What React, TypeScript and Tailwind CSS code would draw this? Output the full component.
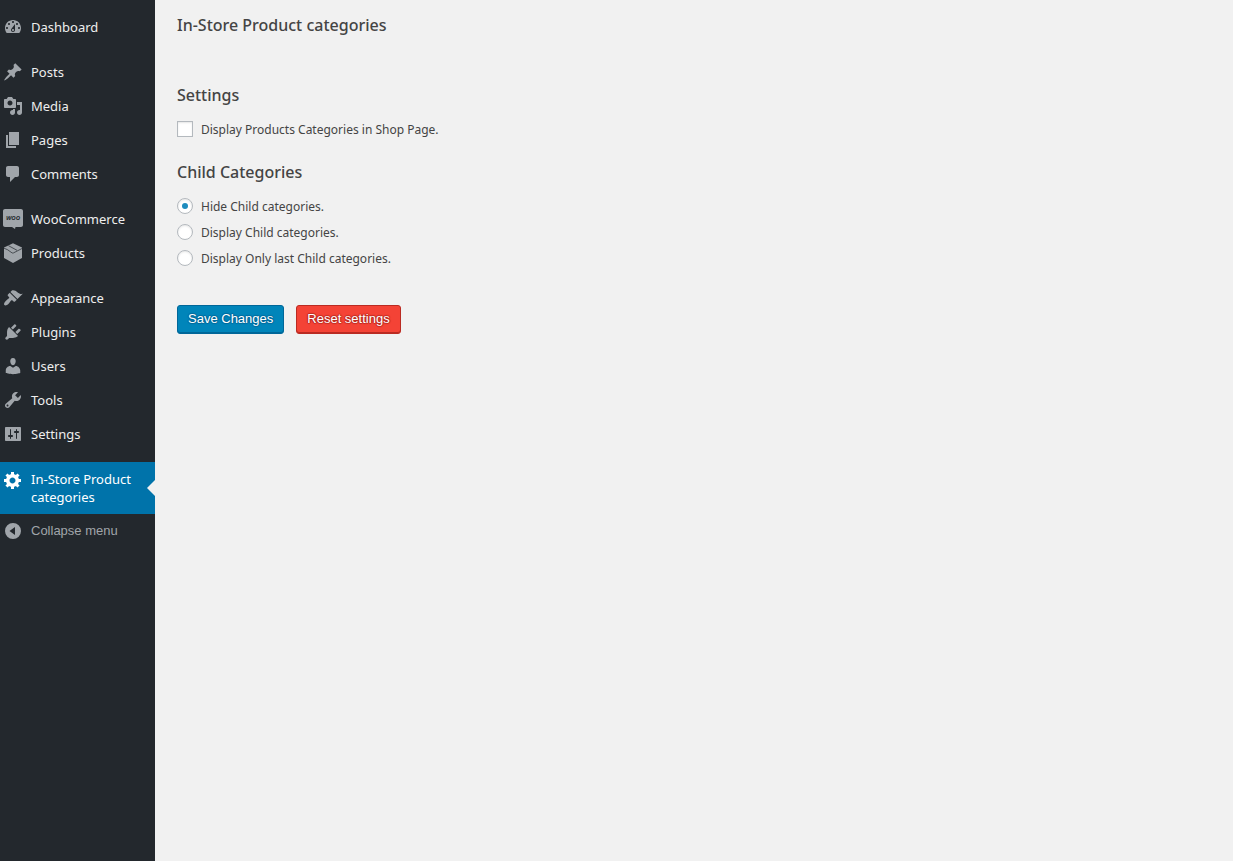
import React from "react";

type MenuItem = { label: string; icon: React.ReactNode };

const Glyph = ({ d }: { d: string }) => <path fillRule="evenodd" d={d} />;

const Icon = ({ children }: { children: React.ReactNode }) => (
  <svg viewBox="0 0 20 20" className="size-5 shrink-0 overflow-visible" fill="currentColor" aria-hidden="true">
    {children}
  </svg>
);

const groups: MenuItem[][] = [
  [
    {
      label: "Dashboard",
      icon: (
        <Glyph d="M3.76 16h12.48c1.1-1.37 1.76-3.11 1.76-5 0-4.42-3.58-8-8-8s-8 3.58-8 8c0 1.89.66 3.63 1.76 5zM10 4c.55 0 1 .45 1 1s-.45 1-1 1-1-.45-1-1 .45-1 1-1zM6 6c.55 0 1 .45 1 1s-.45 1-1 1-1-.45-1-1 .45-1 1-1zm8 0c.55 0 1 .45 1 1s-.45 1-1 1-1-.45-1-1 .45-1 1-1zm-5.37 5.55L12 7v6c0 1.1-.9 2-2 2s-2-.9-2-2c0-.57.24-1.08.63-1.45zM4 10c.55 0 1 .45 1 1s-.45 1-1 1-1-.45-1-1 .45-1 1-1zm12 0c.55 0 1 .45 1 1s-.45 1-1 1-1-.45-1-1 .45-1 1-1zm-5 3c0-.55-.45-1-1-1s-1 .45-1 1 .45 1 1 1 1-.45 1-1z" />
      ),
    },
  ],
  [
    {
      label: "Posts",
      icon: (
        <Glyph d="M10.44 3.02l1.82-1.82 6.36 6.35-1.83 1.82c-1.05-.68-2.48-.57-3.41.36l-.75.75c-.92.93-1.04 2.35-.35 3.41l-1.83 1.82-2.41-2.41-2.8 2.79c-.42.42-3.38 2.71-3.8 2.29s1.86-3.39 2.28-3.81l2.79-2.79L4.1 9.36l1.83-1.82c1.05.69 2.48.57 3.4-.36l.75-.75c.93-.92 1.05-2.35.36-3.41z" />
      ),
    },
    {
      label: "Media",
      icon: (
        <Glyph d="M13 11V4c0-.55-.45-1-1-1h-1.67L9 1H5L3.67 3H2c-.55 0-1 .45-1 1v7c0 .55.45 1 1 1h10c.55 0 1-.45 1-1zM7 4.5c1.38 0 2.5 1.12 2.5 2.5S8.38 9.5 7 9.5 4.5 8.38 4.5 7 5.62 4.5 7 4.5zM14 6h5v10.5c0 1.38-1.12 2.5-2.5 2.5S14 17.88 14 16.5s1.12-2.5 2.5-2.5c.17 0 .34.02.5.05V9h-3V6zm-4 8.05V13h2v3.5c0 1.38-1.12 2.5-2.5 2.5S7 17.88 7 16.5 8.12 14 9.5 14c.17 0 .34.02.5.05z" />
      ),
    },
    { label: "Pages", icon: <Glyph d="M6 15V2h10v13H6zm-1 1h8v2H3V5h2v11z" /> },
    {
      label: "Comments",
      icon: <Glyph d="M5 2h9c1.1 0 2 .9 2 2v7c0 1.1-.9 2-2 2h-2l-5 5v-5H5c-1.1 0-2-.9-2-2V4c0-1.1.9-2 2-2z" />,
    },
  ],
  [
    {
      label: "WooCommerce",
      icon: (
        <>
          <path d="M2 0h16c1.1 0 2 .9 2 2v14c0 1.1-.9 2-2 2h-5.5l-.5 2-3-2H2c-1.1 0-2-.9-2-2V2C0 .9.9 0 2 0z" />
          <text
            x="10"
            y="11"
            textAnchor="middle"
            className="fill-[#23282d] font-['Open_Sans'] text-[6px] font-bold italic"
          >
            WOO
          </text>
        </>
      ),
    },
    {
      label: "Products",
      icon: (
        <>
          <path d="M10 .3l9 4.2V15l-9 5-9-5V4.5z" />
          <path
            d="M1 5.200l3.500 1.500 4.700 3.300 1.300-.1L19 5.500M5.500 2.700l8.500 4.600"
            fill="none"
            className="stroke-[#23282d]"
            strokeWidth=".7"
          />
        </>
      ),
    },
  ],
  [
    {
      label: "Appearance",
      icon: (
        <Glyph d="M14.48 11.06L7.41 3.99l1.5-1.5c.5-.56 2.3-.47 3.51.32 1.21.8 1.43 1.28 2.91 2.1 1.18.64 2.45 1.26 4.45.85zm-.71.71L6.7 4.7 4.93 6.47c-.39.39-.39 1.02 0 1.41l1.06 1.06c.39.39.39 1.03 0 1.42-.6.6-1.43 1.11-2.21 1.69-.35.26-.7.53-1.01.84C1.43 14.23.4 16.08 1.4 17.07c.99 1 2.84-.03 4.18-1.36.31-.31.58-.66.85-1.02.57-.78 1.08-1.61 1.69-2.21.39-.39 1.02-.39 1.41 0l1.06 1.06c.39.39 1.02.39 1.41 0z" />
      ),
    },
    {
      label: "Plugins",
      icon: (
        <Glyph d="M13.11 4.36L9.87 7.6 8 5.73l3.24-3.24c.35-.34 1.05-.2 1.56.32.52.51.66 1.21.31 1.55zm-8 1.77l.91-1.12 9.01 9.01-1.19.84c-.71.71-2.63 1.16-3.82 1.16H6.14L4.9 17.26c-.59.59-1.54.59-2.12 0-.59-.58-.59-1.53 0-2.12l1.24-1.24v-3.88c0-1.13.4-3.19 1.09-3.89zm7.26 3.97l3.24-3.24c.34-.35 1.04-.21 1.55.31.52.51.66 1.21.31 1.55l-3.24 3.25z" />
      ),
    },
    {
      label: "Users",
      icon: (
        <Glyph d="M10 9.25c-2.27 0-2.73-3.44-2.73-3.44C7 4.02 7.82 2 9.97 2c2.16 0 2.98 2.02 2.71 3.81 0 0-.41 3.44-2.68 3.44zm0 2.57L12.72 10c2.39 0 4.52 2.33 4.52 4.53v2.49s-3.65 1.13-7.24 1.13c-3.65 0-7.24-1.13-7.24-1.13v-2.49c0-2.25 1.94-4.48 4.47-4.48z" />
      ),
    },
    {
      label: "Tools",
      icon: (
        <Glyph d="M16.68 9.77c-1.34 1.34-3.3 1.67-4.95.99l-5.41 6.52c-.99.99-2.59.99-3.58 0s-.99-2.59 0-3.57l6.52-5.42c-.68-1.65-.35-3.61.99-4.95 1.28-1.28 3.12-1.62 4.72-1.06l-2.89 2.89 2.82 2.82 2.86-2.87c.53 1.58.18 3.39-1.08 4.65zM3.81 16.21c.4.39 1.04.39 1.43 0 .4-.4.4-1.04 0-1.43-.39-.4-1.03-.4-1.43 0-.39.39-.39 1.03 0 1.43z" />
      ),
    },
    {
      label: "Settings",
      icon: (
        <Glyph d="M18 16V4c0-.55-.45-1-1-1H3c-.55 0-1 .45-1 1v12c0 .55.45 1 1 1h14c.55 0 1-.45 1-1zM8 11h1c.55 0 1 .45 1 1s-.45 1-1 1H8v1.5c0 .28-.22.5-.5.5s-.5-.22-.5-.5V13H6c-.55 0-1-.45-1-1s.45-1 1-1h1V5.5c0-.28.22-.5.5-.5s.5.22.5.5V11zm5-2h-1c-.55 0-1-.45-1-1s.45-1 1-1h1V5.5c0-.28.22-.5.5-.5s.5.22.5.5V7h1c.55 0 1 .45 1 1s-.45 1-1 1h-1v5.5c0 .28-.22.5-.5.5s-.5-.22-.5-.5V9z" />
      ),
    },
  ],
];

const childOptions = [
  { id: "hide", label: "Hide Child categories." },
  { id: "display", label: "Display Child categories." },
  { id: "last", label: "Display Only last Child categories." },
];

function Sidebar() {
  return (
    <nav className="w-[155px] shrink-0 bg-[#23282d] pt-[10px] text-[13px] leading-[18px] text-[#eeeeee]">
      {groups.map((group) => (
        <ul key={group[0].label} className="mb-[11px]">
          {group.map((item) => (
            <li key={item.label}>
              <a href="#" className="flex h-[34px] items-center gap-2 pl-[3px] hover:text-[#00b9eb]">
                <span className="text-[#a0a5aa]">
                  <Icon>{item.icon}</Icon>
                </span>
                {item.label}
              </a>
            </li>
          ))}
        </ul>
      ))}
      <a href="#" className="relative flex gap-2 bg-[#0073aa] py-2 pl-[3px] text-white" aria-current="page">
        <Icon>
          <Glyph d="M18 12h-2.18c-.17.7-.44 1.35-.81 1.93l1.54 1.54-2.1 2.1-1.54-1.54c-.58.36-1.23.63-1.91.79V19H8v-2.18c-.68-.16-1.33-.43-1.91-.79l-1.54 1.54-2.12-2.12 1.54-1.54c-.36-.58-.63-1.23-.79-1.91H1V9.03h2.17c.16-.7.44-1.35.8-1.94L2.43 5.55l2.1-2.1 1.54 1.54c.58-.37 1.24-.64 1.93-.81V2h3v2.18c.68.16 1.33.43 1.91.79l1.54-1.54 2.12 2.12-1.54 1.54c.36.59.64 1.24.8 1.94H18V12zm-8.500 1.500c1.660 0 3-1.340 3-3s-1.340-3-3-3-3 1.340-3 3 1.340 3 3 3z" />
        </Icon>
        <span>In-Store Product categories</span>
        <span className="absolute top-1/2 right-0 -mt-2 border-8 border-l-0 border-transparent border-r-[#f1f1f1]" />
      </a>
      <button
        type="button"
        className="flex h-[34px] w-full items-center gap-2 pl-[3px] text-left font-['Liberation_Sans',Arial,sans-serif] text-[13px] text-[#a0a5aa]"
      >
        <Icon>
          <Glyph d="M10 2a8 8 0 1 0 0 16a8 8 0 1 0 0-16zM12 6v8L6.5 10z" />
        </Icon>
        Collapse menu
      </button>
    </nav>
  );
}

export default function App() {
  return (
    <div className="flex min-h-screen bg-[#f1f1f1] font-['Noto_Sans',sans-serif] text-[#444444]">
      <Sidebar />
      <main className="flex-1 px-[22px] pt-3">
        <form onSubmit={(e) => e.preventDefault()}>
          <h1 className="text-base leading-[26px] font-medium">In-Store Product categories</h1>
          <section className="mt-11">
            <h2 className="text-base leading-[26px] font-medium">Settings</h2>
            <div className="mt-2 flex h-[26px] items-center gap-2">
              <input
                id="shop-page"
                type="checkbox"
                className="size-4 appearance-none border border-[#b4b9be] bg-white shadow-[inset_0_1px_2px_rgba(0,0,0,0.1)] checked:bg-[#1e8cbe]"
              />
              <label htmlFor="shop-page" className="pt-0.5 text-xs">
                Display Products Categories in Shop Page.
              </label>
            </div>
          </section>
          <section className="mt-[17px]">
            <h2 className="text-base leading-[26px] font-medium">Child Categories</h2>
            <div className="mt-2">
              {childOptions.map((o, i) => (
                <div key={o.id} className="flex h-[26px] items-center gap-2">
                  <input
                    id={o.id}
                    type="radio"
                    name="child"
                    defaultChecked={i === 0}
                    className="grid size-4 appearance-none place-items-center rounded-full border border-[#b4b9be] bg-white shadow-[inset_0_1px_2px_rgba(0,0,0,0.1)] before:size-[6px] before:rounded-full checked:before:bg-[#1e8cbe]"
                  />
                  <label htmlFor={o.id} className="pt-0.5 text-xs">
                    {o.label}
                  </label>
                </div>
              ))}
            </div>
          </section>
          <div className="mt-[34px] flex gap-3 font-['Liberation_Sans',Arial,sans-serif] text-[13px] text-white">
            <button
              type="submit"
              className="h-[29px] rounded-[3px] border border-[#006799] bg-[#0085ba] px-[10px] pb-[2px] shadow-[inset_0_-1px_0_#006799] [text-shadow:0_-1px_1px_#006799,1px_0_1px_#006799,0_1px_1px_#006799,-1px_0_1px_#006799]"
            >
              Save Changes
            </button>
            <button
              type="reset"
              className="h-[29px] rounded-[3px] border border-[#ba2b22] bg-[#f44336] px-[10px] pb-[2px] shadow-[inset_0_-1px_0_#ba2b22] [text-shadow:0_-1px_1px_#ba2b22,1px_0_1px_#ba2b22,0_1px_1px_#ba2b22,-1px_0_1px_#ba2b22]"
            >
              Reset settings
            </button>
          </div>
        </form>
      </main>
    </div>
  );
}
